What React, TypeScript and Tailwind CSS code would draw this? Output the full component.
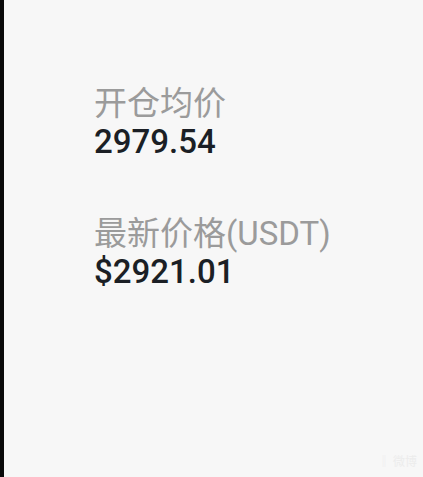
export default function App() {
    return (
        <div className="flex h-[477px] w-[423px] bg-[#f7f7f7]" style={{ fontFamily: 'Roboto, "Noto Sans CJK SC", sans-serif' }}>
            <div className="w-[4px] shrink-0 bg-[#0a0a0a]" />
            <div className="relative flex flex-1 flex-col pl-[90px] pt-[85px]">
                <div className="flex flex-col">
                    <span className="text-[33px] leading-[38px] text-[#9b9b9b]">开仓均价</span>
                    <span className="text-[33px] font-medium leading-[38px] text-[#1b1f25]">2979.54</span>
                </div>
                <div className="mt-[54px] flex flex-col">
                    <span className="text-[33px] leading-[38px] text-[#9b9b9b]">最新价格(USDT)</span>
                    <span className="text-[33px] font-medium leading-[38px] text-[#1b1f25]">$2921.01</span>
                </div>
                <span className="absolute bottom-[6px] right-[6px] text-[12px] text-[#ececec]">‖ 微博</span>
            </div>
        </div>
    )
}
